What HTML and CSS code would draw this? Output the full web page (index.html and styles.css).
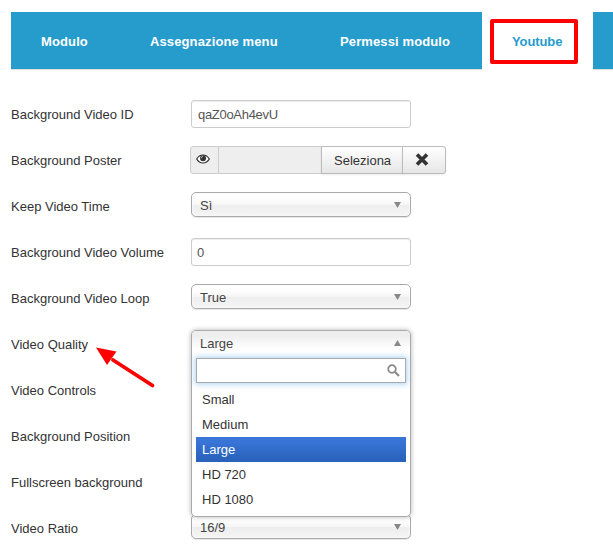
FILE: index.html
```html
<!DOCTYPE html>
<html lang="it">
<head>
<meta charset="utf-8">
<title>Modulo</title>
<link rel="stylesheet" href="styles.css">
</head>
<body>
<nav class="tabs">
  <a class="tab t1">Modulo</a>
  <a class="tab t2">Assegnazione menu</a>
  <a class="tab t3">Permessi modulo</a>
  <a class="tab t4 active"><span>Youtube</span><i class="frame"></i></a>
  <a class="tab rest"></a>
</nav>
<main class="form">
  <div class="row"><label>Background Video ID</label><div class="input id">qaZ0oAh4evU</div></div>
  <div class="row"><label>Background Poster</label>
    <div class="media">
      <span class="eye"><svg width="14" height="10" viewBox="0 0 14 10"><path d="M.7 5C2.200 2.400 4.400 1 7 1s4.800 1.400 6.300 4C11.800 7.600 9.600 9 7 9S2.200 7.600.7 5Z" fill="#fff" stroke="#333" stroke-width="1.200"/><circle cx="7" cy="4.300" r="3" fill="#333"/><path d="M5.300 4.300C5.300 3.200 6 2.600 7 2.500" fill="none" stroke="#eee" stroke-width=".8"/></svg></span>
      <span class="blank"></span>
      <span class="btn select-btn">Seleziona</span>
      <span class="btn clear"><svg width="14" height="13" viewBox="0 0 14 13"><path d="M2 1.500 12 11.500M12 1.500 2 11.500" stroke="#333" stroke-width="3.600"/></svg></span>
    </div>
  </div>
  <div class="row"><label>Keep Video Time</label><div class="select"><span>Sì</span><i class="down"></i></div></div>
  <div class="row"><label>Background Video Volume</label><div class="input number">0</div></div>
  <div class="row"><label>Background Video Loop</label><div class="select"><span>True</span><i class="down"></i></div></div>
  <div class="row"><label>Video Quality</label>
    <svg class="arrow" width="62" height="46" viewBox="0 0 62 46"><path d="M57.500 39.500 18 14" stroke="#f00" stroke-width="3.800" stroke-linecap="round"/><path d="M1 1.500 21.500 5.500 12 19Z" fill="#f00"/></svg>
    <div class="open">
      <div class="current"><span>Large</span><i class="up"></i></div>
      <div class="drop">
        <div class="search"><svg width="13" height="13" viewBox="0 0 13 13"><circle cx="5" cy="5" r="3.800" fill="none" stroke="#888" stroke-width="1.700"/><path d="m8 8 4 4" stroke="#888" stroke-width="2.200"/></svg></div>
        <ul>
          <li>Small</li>
          <li>Medium</li>
          <li class="chosen">Large</li>
          <li>HD 720</li>
          <li>HD 1080</li>
        </ul>
      </div>
    </div>
  </div>
  <div class="row"><label>Video Controls</label></div>
  <div class="row"><label>Background Position</label></div>
  <div class="row"><label>Fullscreen background</label></div>
  <div class="row"><label>Video Ratio</label><div class="select"><span>16/9</span><i class="down"></i></div></div>
</main>
</body>
</html>
```
FILE: styles.css
```css
* { box-sizing: border-box; }
body {
  margin: 0;
  height: 553px;
  overflow: hidden;
  background: #fff;
  color: #333;
  font: 13px/18px "Liberation Sans", Arial, sans-serif;
  letter-spacing: 0;
  white-space: nowrap;
}
.tabs { display: flex; margin: 12px 0 0 11px; height: 58px; }
.tab {
  flex: none;
  padding: 21px 0 0 30px;
  background: #269ccd;
  border-bottom: 1px solid #ddd;
  color: #fff;
  font-weight: bold;
  letter-spacing: .12px;
}
.t1 { width: 109px; }
.t2 { width: 190px; }
.t3 { width: 172px; }
.t4 { width: 111px; letter-spacing: -.1px; }
.rest { width: 20px; }
.active { position: relative; background: #fff; border-color: #fff; color: #269ccd; }
.frame {
  position: absolute;
  left: 8px;
  top: 7px;
  width: 88px;
  height: 45px;
  border: 4px solid #f00;
  border-radius: 2px;
}
.form { margin: 30px 0 0 11px; }
.row { display: flex; position: relative; height: 46px; }
.row label { width: 180px; flex: none; padding-top: 6px; }
.input {
  width: 220px;
  height: 28px;
  padding: 5px 6px;
  line-height: 17px;
  border: 1px solid #ccc;
  border-radius: 3px;
  color: #555;
  box-shadow: inset 0 1px 1px rgba(0,0,0,.075);
}
.id { letter-spacing: -.3px; }
.number { padding-left: 5px; }
.media { display: flex; margin-left: -1px; height: 28px; }
.eye {
  width: 29px;
  padding: 7px 0 0 5px;
  line-height: 0;
  background: #eee;
  border: 1px solid #ccc;
  border-radius: 3px 0 0 3px;
}
.blank { width: 102px; background: #eee; border: solid #ccc; border-width: 1px 0; }
.btn {
  border: 1px solid #bbb;
  background: linear-gradient(#fff, #e6e6e6);
  box-shadow: 0 1px 2px rgba(0,0,0,.08);
}
.select-btn { width: 82px; padding: 5px 0 0 12px; line-height: 17px; }
.clear { width: 44px; margin-left: -1px; padding: 6px 0 0 12px; line-height: 0; border-radius: 0 3px 3px 0; }
.select {
  display: flex;
  justify-content: space-between;
  width: 220px;
  height: 25px;
  padding: 4px 8px;
  border: 1px solid #aaa;
  border-radius: 5px;
  background: linear-gradient(#fff 20%, #f6f6f6 50%, #eee 52%, #f4f4f4 100%);
  box-shadow: inset 0 0 3px #fff, 0 1px 1px rgba(0,0,0,.1);
  color: #444;
}
.down, .up {
  width: 7px;
  height: 6px;
  margin: 5px 1px 0 0;
  background: #888;
  clip-path: polygon(0 0, 100% 0, 50% 100%);
}
.up { clip-path: polygon(50% 0, 100% 100%, 0 100%); }
.open {
  position: absolute;
  z-index: 2;
  left: 180px;
  top: 0;
  width: 220px;
  height: 187px;
  border: 1px solid #aaa;
  border-radius: 5px;
  background: #fff;
  box-shadow: 0 0 5px rgba(0,0,0,.3);
}
.current {
  display: flex;
  justify-content: space-between;
  height: 23px;
  padding: 4px 8px;
  border-radius: 4px 4px 0 0;
  background: linear-gradient(#eee 20%, #fff 80%);
  color: #444;
}
.drop { padding: 4px; }
.search {
  display: flex;
  justify-content: flex-end;
  height: 25px;
  padding: 5px;
  border: 1px solid #aaa;
  background: #fff;
  box-shadow: 0 0 6px 1px rgba(82,168,236,.5);
}
ul { list-style: none; margin: 4px 0 0; padding: 0; }
li { height: 25px; padding: 4px 6px 3px; }
.chosen { background: linear-gradient(#3875d7 20%, #2a62bc 90%); color: #fff; }
.arrow { position: absolute; left: 84px; top: 16px; }
```
